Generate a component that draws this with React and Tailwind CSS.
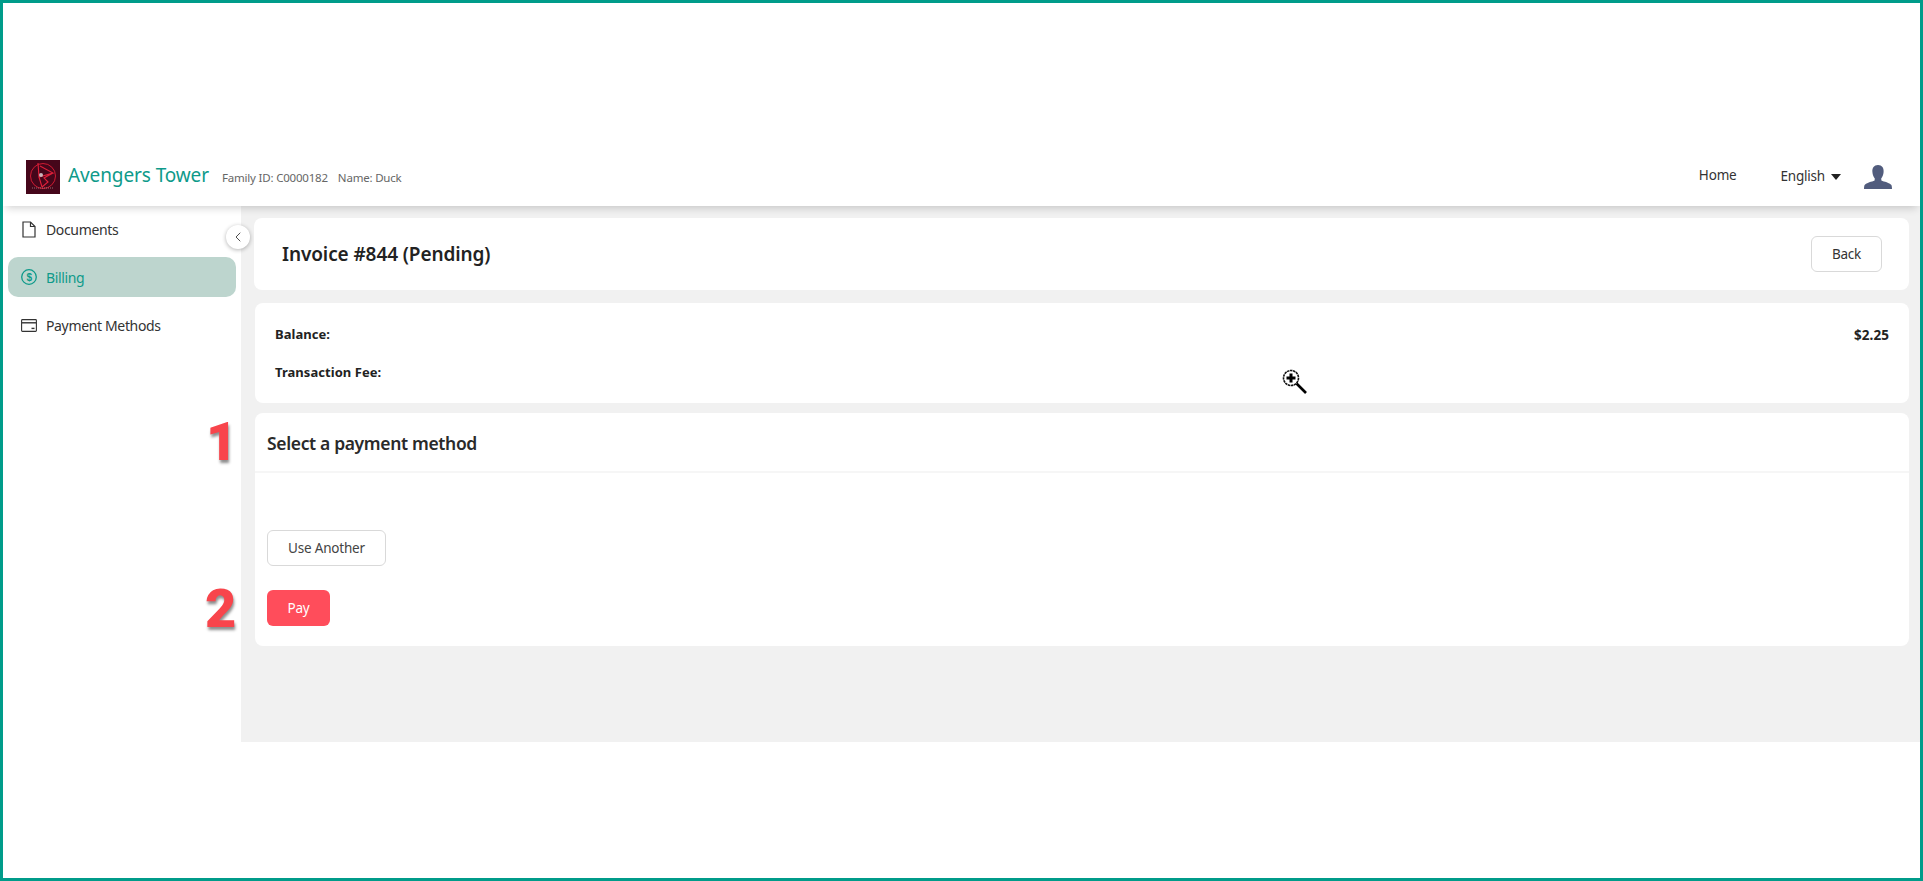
import React from "react";
import { ChevronLeft } from "lucide-react";

function Logo() {
  return (
    <svg width="34" height="34" viewBox="0 0 34 34" className="shrink-0">
      <rect width="34" height="34" fill="#45061a" />
      <circle cx="17" cy="16" r="12.5" fill="none" stroke="#d01a32" strokeWidth="1" />
      <path d="M12 3 L13 17 L27 13 L14 6 M13 17 L16 27 M16 27 L22 22 L18 18 L27 13" fill="none" stroke="#e0203a" strokeWidth="1.1" />
      <circle cx="15" cy="15" r="2" fill="#c9b8bc" />
      <path d="M6 28 H28" stroke="#a88" strokeWidth="0.8" strokeDasharray="1 1" />
    </svg>
  );
}

function DocIcon() {
  return (
    <svg width="14" height="17" viewBox="0 0 14 17" fill="none" stroke="#333" strokeWidth="1.2" className="shrink-0">
      <path d="M1 1 H8.5 L13 5.5 V16 H1 Z" />
      <path d="M8.5 1 V5.5 H13" />
    </svg>
  );
}

function BillingIcon() {
  return (
    <svg width="16" height="16" viewBox="0 0 16 16" fill="none" stroke="#0e9a8a" className="shrink-0">
      <circle cx="8" cy="8" r="7.3" strokeWidth="1.3" />
      <text x="8" y="11.6" textAnchor="middle" fontSize="10" fontWeight="bold" fontFamily="Liberation Sans" fill="#0e9a8a" stroke="none">$</text>
    </svg>
  );
}

function CardIcon() {
  return (
    <svg width="16" height="13" viewBox="0 0 16 13" fill="none" className="shrink-0">
      <rect x="0.6" y="0.6" width="14.8" height="11.8" rx="0.8" stroke="#333" strokeWidth="1.1" />
      <path d="M1 3.8 H15" stroke="#333" strokeWidth="1.4" />
      <path d="M10.5 9.4 H13.5" stroke="#333" strokeWidth="1.4" />
    </svg>
  );
}

function UserIcon() {
  return (
    <svg width="28" height="24" viewBox="0 0 28 24" fill="#515c7d" className="shrink-0">
      <path d="M14 0 C18 0 20 3 19.6 7 C19.4 10 18.4 12 17.2 13.4 L17.4 15.4 C20 16.6 25.6 17.6 27.4 20 C27.8 21 28 22.6 28 24 H0 C0 22.6 0.2 21 0.6 20 C2.4 17.6 8 16.6 10.6 15.4 L10.8 13.4 C9.6 12 8.6 10 8.4 7 C8 3 10 0 14 0 Z" />
    </svg>
  );
}

function Cursor() {
  return (
    <svg width="26" height="26" viewBox="0 0 26 26" className="absolute left-[1279px] top-[366px]">
      <circle cx="9" cy="9" r="7.5" fill="#fff" stroke="#111" strokeWidth="1.6" strokeDasharray="2.5 0.6" />
      <path d="M9 4.5 V13.5 M4.5 9 H13.5" stroke="#000" strokeWidth="3" />
      <path d="M14.5 14.5 L24 24" stroke="#000" strokeWidth="2.6" />
    </svg>
  );
}

function NavItem({ icon, label, active, className }) {
  return (
    <div className={`flex items-center gap-[9px] mx-[5px] pl-[13px] rounded-[10px] text-[14px] tracking-[-0.35px] ${active ? "bg-[#bdd5ce] text-[#0e9a8a]" : "text-[#333]"} ${className}`}>
      <span className="w-[16px] flex justify-center">{icon}</span>
      <span>{label}</span>
    </div>
  );
}

export default function App() {
  return (
    <div className="relative w-[1923px] h-[881px] box-border border-[3px] border-[#009c8a] bg-white flex flex-col overflow-hidden text-[#222] font-['Noto_Sans','Open_Sans',sans-serif]">
      <div className="h-[144px] shrink-0" />
      <header className="relative z-10 h-[59px] shrink-0 flex items-center bg-white pl-[23px] pr-[28px] shadow-[0_5px_8px_-3px_rgba(0,0,0,0.18)]">
        <Logo />
        <span className="ml-[8px] text-[19px] leading-none text-[#0e9a8a] tracking-[-0.1px] mt-[-2px]">Avengers Tower</span>
        <span className="ml-[13px] mt-[3px] text-[11.5px] tracking-[-0.2px] text-[#666]">Family ID: C0000182</span>
        <span className="ml-[10px] mt-[3px] text-[11.5px] tracking-[-0.2px] text-[#666]">Name: Duck</span>
        <span className="ml-auto text-[13.5px] tracking-[-0.2px] text-[#333] mt-[-2px]">Home</span>
        <span className="ml-[44px] text-[13.5px] tracking-[-0.2px] text-[#333]">English</span>
        <span className="ml-[6px] w-0 h-0 border-x-[5.5px] border-x-transparent border-t-[6px] border-t-[#222]" />
        <span className="ml-[23px]"><UserIcon /></span>
      </header>
      <div className="h-[536px] shrink-0 flex">
        <aside className="relative w-[238px] shrink-0 bg-white pt-[3px]">
          <NavItem className="h-[40px]" icon={<DocIcon />} label="Documents" />
          <NavItem className="h-[40px] mt-[8px]" active icon={<BillingIcon />} label="Billing" />
          <NavItem className="h-[40px] mt-[8px]" icon={<CardIcon />} label="Payment Methods" />
          <div className="absolute left-[223px] top-[19px] w-[24px] h-[24px] rounded-full bg-white shadow-[0_1px_4px_rgba(0,0,0,0.3)] flex items-center justify-center z-10">
            <ChevronLeft size={16} strokeWidth={1.3} color="#333" />
          </div>
        </aside>
        <main className="flex-1 bg-[#f1f1f1] pl-[13px] pr-[11px] pt-[12px] flex flex-col">
          <section className="h-[72px] bg-white rounded-[8px] flex items-center pl-[28px] pr-[27px]">
            <h1 className="mt-[1px] text-[19px] font-semibold tracking-[-0.1px] text-[#222]">Invoice #844 (Pending)</h1>
            <button className="ml-auto w-[71px] h-[36px] border border-[#d9d9d9] rounded-[6px] bg-white text-[13.5px] tracking-[-0.2px] text-[#333]">Back</button>
          </section>
          <section className="h-[100px] mt-[13px] ml-px bg-white rounded-[8px] pl-[20px] pr-[20px] pt-[13px] text-[13px] font-bold tracking-[0.05px] text-[#222]">
            <div className="flex justify-between h-[38px] items-center"><span>Balance:</span><span className="text-[13.5px]">$2.25</span></div>
            <div className="h-[38px] flex items-center"><span>Transaction Fee:</span></div>
          </section>
          <section className="h-[233px] mt-[10px] ml-px bg-white rounded-[8px] flex flex-col">
            <div className="h-[60px] shrink-0 border-b-2 border-[#f6f6f6] pl-[12px] pt-[2px] flex items-center text-[17.5px] font-semibold tracking-[-0.35px] text-[#2a2a2a]">Select a payment method</div>
            <div className="pl-[12px] pt-[57px] flex flex-col items-start gap-[24px]">
              <button className="w-[119px] h-[36px] border border-[#d9d9d9] rounded-[6px] bg-white text-[13.5px] tracking-[-0.2px] text-[#444]">Use Another</button>
              <button className="w-[63px] h-[36px] rounded-[6px] bg-[#ff4d5b] text-white text-[13.5px] tracking-[-0.2px]">Pay</button>
            </div>
          </section>
        </main>
      </div>
      <span className="absolute left-[203px] top-[412px] text-[54px] leading-none font-black text-[#f8454c] font-['Roboto',sans-serif] [text-shadow:1px_3px_3px_rgba(0,0,0,0.45)]">1</span>
      <span className="absolute left-[202px] top-[579px] text-[54px] leading-none font-black text-[#f8454c] font-['Roboto',sans-serif] [text-shadow:1px_3px_3px_rgba(0,0,0,0.45)]">2</span>
      <Cursor />
    </div>
  );
}
